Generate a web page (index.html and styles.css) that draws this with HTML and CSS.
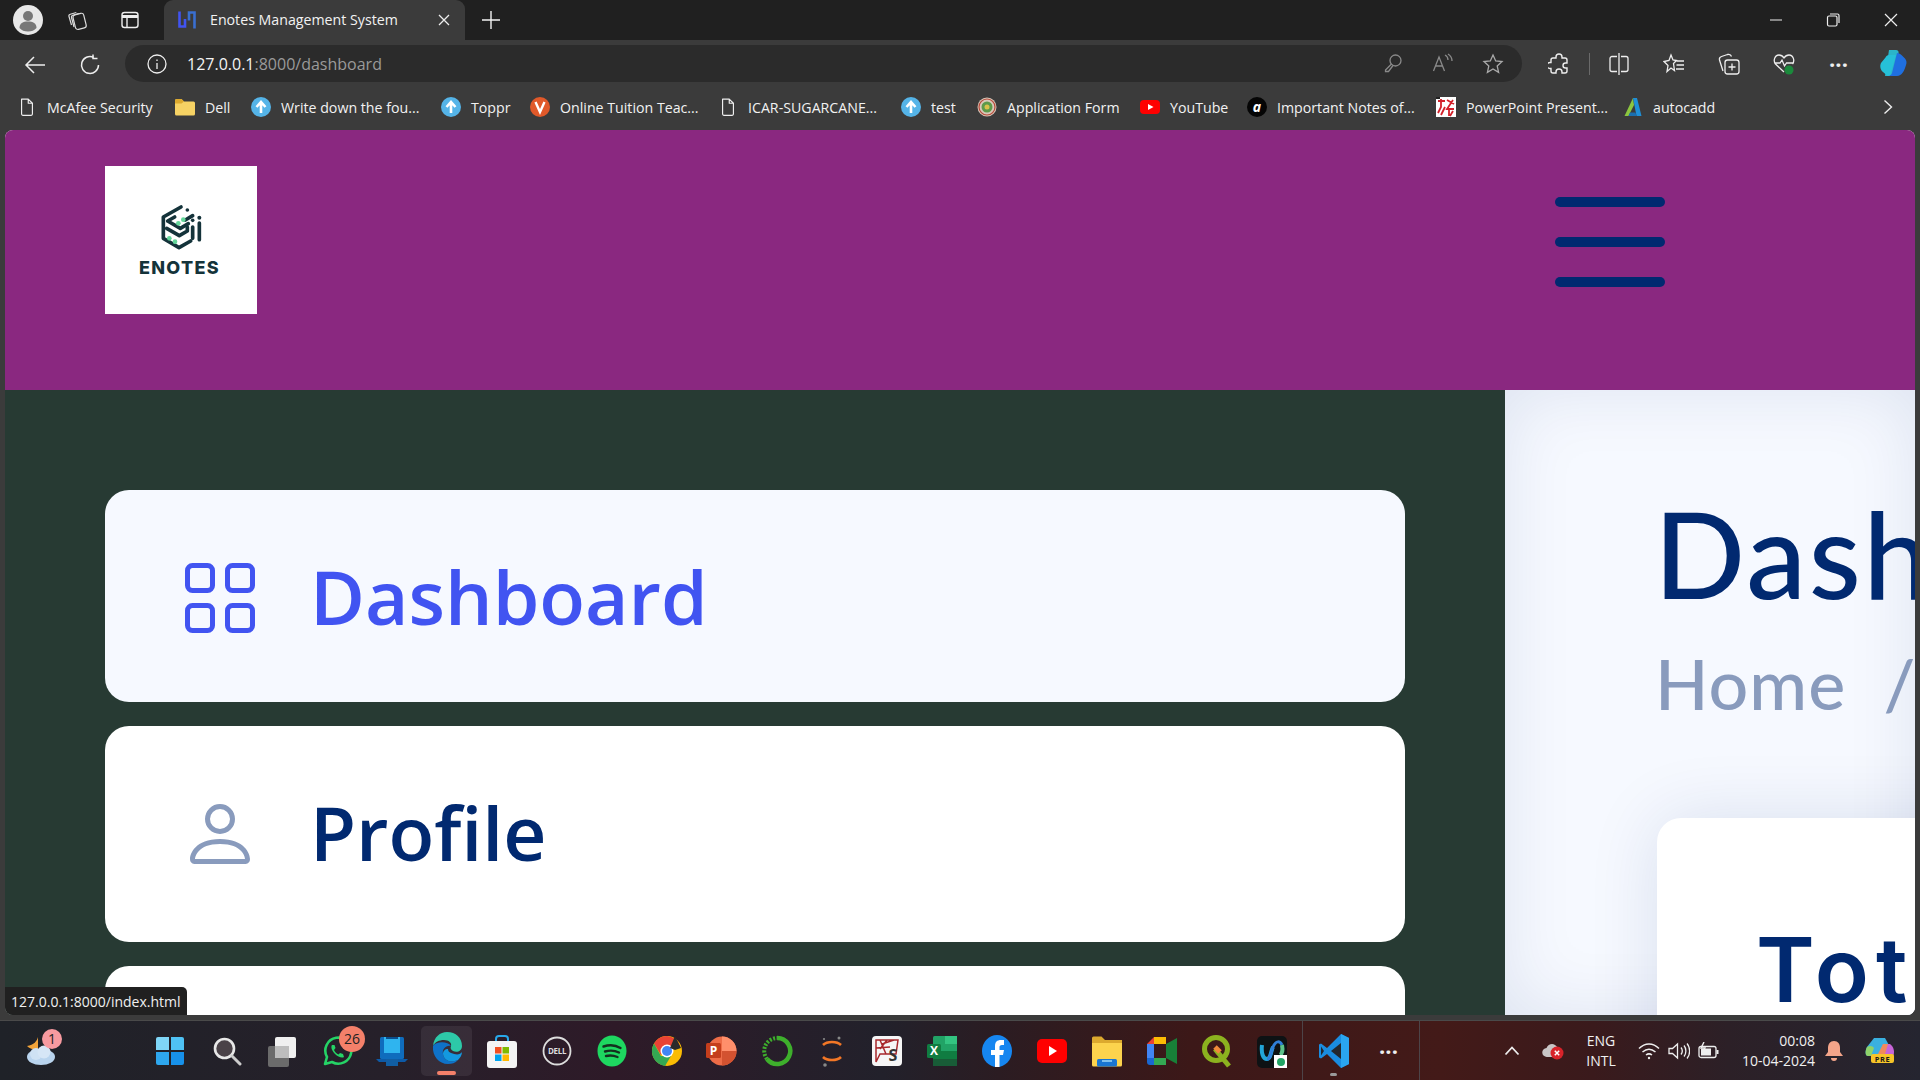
FILE: index.html
```html
<!DOCTYPE html>
<html lang="en">
<head>
<meta charset="utf-8">
<title>Enotes Management System</title>
<link rel="stylesheet" href="styles.css">
</head>
<body>
<svg class="defs" width="0" height="0">
  <symbol id="doc" viewBox="0 0 20 24"><path d="M3.5 2.5h8l5 5v13a1.5 1.5 0 0 1-1.500 1.500H5a1.500 1.500 0 0 1-1.500-1.500zM11.500 2.500v5h5" fill="none" stroke="#eee" stroke-width="1.400" stroke-linejoin="round"/></symbol>
  <symbol id="up" viewBox="0 0 20 20"><circle cx="10" cy="10" r="10" fill="#55b4e8"/><path d="M10 16V6M5.500 10 10 5l4.500 5" fill="none" stroke="#fff" stroke-width="2.600"/></symbol>
</svg>

<div class="tabstrip">
  <span class="avatar"><svg width="30" height="30" viewBox="0 0 30 30"><circle cx="15" cy="15" r="15" fill="#e8e8e8"/><circle cx="15" cy="11" r="5" fill="#777"/><path d="M6.500 23c0-5 3.500-6.500 8.500-6.500s8.500 1.500 8.500 6.500c-2 2.500-5 3.500-8.500 3.500s-6.500-1-8.500-3.500z" fill="#777"/></svg></span>
  <span class="strip-btn strip-btn-first"><svg width="22" height="22" viewBox="0 0 22 22" fill="none" stroke="#ddd" stroke-width="1.200"><rect x="8" y="5" width="11" height="15" rx="2.500" transform="rotate(-14 13 12)"/><path d="M5.500 16 3 7.500c-.3-1 .3-2 1.300-2.300l6-1.700M8 18 5.500 8.500c-.3-1 .3-2 1.300-2.300l6-1.700"/></svg></span>
  <span class="strip-btn"><svg width="20" height="20" viewBox="0 0 20 20" fill="none" stroke="#eee" stroke-width="1.400"><rect x="2" y="2.500" width="16" height="15" rx="2.500"/><path d="M2 6.500h16" stroke-width="3"/><path d="M7 6.500v11"/></svg></span>
  <div class="tab">
    <svg width="20" height="20" viewBox="0 0 20 20" fill="none" stroke="#4154f1" stroke-width="2.600"><path d="M2.500 1.500v15h5.500V9"/><path d="M17.500 18.500v-16H12v8" stroke="#3a6fd0"/></svg>
    <span class="tab-title">Enotes Management System</span>
    <svg class="tab-x" width="12" height="12" viewBox="0 0 12 12" stroke="#eee" stroke-width="1.300"><path d="M1 1l10 10M11 1 1 11"/></svg>
  </div>
  <svg class="tab-new" width="18" height="18" viewBox="0 0 18 18" stroke="#f2f2f2" stroke-width="1.400"><path d="M9 0v18M0 9h18"/></svg>
  <div class="winctl">
    <svg width="12" height="12" viewBox="0 0 12 12" stroke="#eee"><path d="M0 6h12"/></svg>
    <svg width="14" height="14" viewBox="0 0 14 14" fill="none" stroke="#eee" stroke-width="1.200"><rect x="1.500" y="3" width="9.500" height="10" rx="1.500"/><path d="M4 1h7.500A1.500 1.500 0 0 1 13 2.500V10"/></svg>
    <svg width="14" height="14" viewBox="0 0 14 14" stroke="#eee" stroke-width="1.200"><path d="M1 1l12 12M13 1 1 13"/></svg>
  </div>
</div>

<div class="toolbar">
  <span class="nav-btn"><svg width="22" height="20" viewBox="0 0 22 20" fill="none" stroke="#eee" stroke-width="1.500"><path d="M21 10H2M10 2l-8 8 8 8"/></svg></span>
  <span class="nav-btn nav-reload"><svg width="22" height="22" viewBox="0 0 22 22" fill="none" stroke="#eee" stroke-width="1.500"><path d="M14.500 3.200A8.500 8.500 0 1 0 19.500 11"/><path d="M14 .5v4h4.500"/></svg></span>
  <div class="address">
    <svg class="addr-info" width="20" height="20" viewBox="0 0 20 20" fill="none" stroke="#eee" stroke-width="1.300"><circle cx="10" cy="10" r="9"/><path d="M10 9v6M10 5.500v1.500"/></svg>
    <span class="url"><span class="url-host">127.0.0.1</span>:8000/dashboard</span>
    <span class="addr-end">
      <span class="addr-cell"><svg width="20" height="20" viewBox="0 0 20 20" fill="none" stroke="#8a8a8a" stroke-width="1.300"><circle cx="12.500" cy="7.500" r="5.500"/><path d="M8.500 11 2.500 17v1.500h3l4.500-6"/></svg></span>
      <span class="addr-cell"><svg width="22" height="20" viewBox="0 0 22 20" fill="none" stroke="#8a8a8a" stroke-width="1.300"><path d="M1.500 18 7 4l5.500 14M3.500 13h7"/><path d="M13 2c2 1 3 3 3 5M16 1c2.500 1.500 4 4 4 7"/></svg></span>
      <span class="addr-cell"><svg width="22" height="22" viewBox="0 0 22 22" fill="none" stroke="#aaa" stroke-width="1.300"><path d="m11 2 2.700 6 6.300.600-4.800 4.300 1.400 6.500L11 16l-5.600 3.400 1.400-6.500L2 8.600 8.300 8z"/></svg></span>
    </span>
  </div>
  <div class="tools">
    <span class="tool"><svg width="22" height="22" viewBox="0 0 22 22" fill="none" stroke="#eee" stroke-width="1.400"><path d="M8 5V4a3 3 0 0 1 6 0v1h3a2 2 0 0 1 2 2v3h-1.500a2.500 2.500 0 0 0 0 5H19v3a2 2 0 0 1-2 2h-3v-1a3 3 0 0 0-6 0v1H5a2 2 0 0 1-2-2v-2.500H2a3 3 0 0 1 0-6h1V7a2 2 0 0 1 2-2z"/></svg></span>
    <span class="tool-sep"></span>
    <span class="tool"><svg width="20" height="22" viewBox="0 0 20 22" fill="none" stroke="#eee" stroke-width="1.300"><path d="M10 0v22M8 3.500H3A2 2 0 0 0 1 5.500v11a2 2 0 0 0 2 2h5M12 3.500h5a2 2 0 0 1 2 2v11a2 2 0 0 1-2 2h-5"/></svg></span>
    <span class="tool"><svg width="22" height="22" viewBox="0 0 22 22" fill="none" stroke="#eee" stroke-width="1.300"><path d="m8 2 2 5 3.500.5-3 3 1 7L8 15l-4 3.500 1-6-4-4 5-1z"/><path d="M13.500 8H21M13.500 12H21M13 16h8" stroke-width="1.600"/></svg></span>
    <span class="tool"><svg width="22" height="24" viewBox="0 0 22 24" fill="none" stroke="#eee" stroke-width="1.300"><path d="M5 19 1.500 8a3 3 0 0 1 2-3.500l6-2c2-.5 3.500.5 4 2"/><rect x="7" y="8" width="14" height="14" rx="2.500"/><path d="M14 11.500v7M10.500 15h7"/></svg></span>
    <span class="tool"><svg width="22" height="24" viewBox="0 0 22 24"><path d="M11 20 2.500 12C0 9 1.500 3 6 3c2.500 0 4 1.500 5 3 1-1.500 2.500-3 5-3 4.500 0 6 6 3.500 9M2 11h5l2-3 2.500 6 2-3H20" fill="none" stroke="#eee" stroke-width="1.300"/><circle cx="16" cy="18" r="4.500" fill="#1b8a3c"/></svg></span>
    <span class="tool tool-dots">···</span>
    <span class="tool tool-last"><svg width="30" height="30" viewBox="0 0 30 30"><path d="M11 1h7c2 0 3 1.500 2.500 3.500L15 24c-.5 2-2 3-4 3H7z" fill="#2bb5c9"/><path d="M3 14c-1.500 3-.5 7 2 9l4 3.500c1 .5 2 .5 3 .5l6-21H11c-1.500 0-3 1-3.500 2.500z" fill="#26c0d8"/><path d="M19 4c2 0 3.500 1 5 2.500l3 3c1.500 2 2 4 1 6.500-1.500 5.500-4 11-9 11h-9c2 0 3.500-1 4-3z" fill="#1f6fe0"/></svg></span>
  </div>
</div>

<div class="bookmarks">
  <div class="bm-grid">
    <span class="bm"><svg class="bm-ico" viewBox="0 0 20 24"><use href="#doc"/></svg>McAfee Security</span>
    <span class="bm"><svg class="bm-ico" viewBox="0 0 20 20"><path d="M0 3.500A1.500 1.500 0 0 1 1.500 2h5l2.500 2.500h9.500A1.500 1.500 0 0 1 20 6v11a1.500 1.500 0 0 1-1.500 1.500h-17A1.500 1.500 0 0 1 0 17z" fill="#f6d264"/><path d="M0 3.500A1.500 1.500 0 0 1 1.500 2h5L9 4.500 6.500 6.500H0z" fill="#dca92e"/></svg>Dell</span>
    <span class="bm"><svg class="bm-ico" viewBox="0 0 20 20"><use href="#up"/></svg>Write down the fou...</span>
    <span class="bm"><svg class="bm-ico" viewBox="0 0 20 20"><use href="#up"/></svg>Toppr</span>
    <span class="bm"><svg class="bm-ico" viewBox="0 0 20 20"><circle cx="10" cy="10" r="10" fill="#e0592a"/><path d="M5.500 5 10 15l4.500-10" fill="none" stroke="#fff" stroke-width="2.400"/></svg>Online Tuition Teac...</span>
    <span class="bm"><svg class="bm-ico" viewBox="0 0 20 24"><use href="#doc"/></svg>ICAR-SUGARCANE...</span>
    <span class="bm"><svg class="bm-ico" viewBox="0 0 20 20"><use href="#up"/></svg>test</span>
    <span class="bm"><svg class="bm-ico" viewBox="0 0 20 20"><circle cx="10" cy="10" r="9.500" fill="#d8c8b8"/><circle cx="10" cy="10" r="8" fill="none" stroke="#b8483a" stroke-width="1.200"/><circle cx="10" cy="10" r="5.500" fill="#5d9a4a"/><circle cx="10" cy="10" r="2.500" fill="#d9c24a"/></svg>Application Form</span>
    <span class="bm"><svg class="bm-ico" viewBox="0 0 20 20"><rect y="3" width="20" height="14" rx="4" fill="#f00"/><path d="m8 7 5.500 3L8 13z" fill="#fff"/></svg>YouTube</span>
    <span class="bm"><span class="bm-a">a</span>Important Notes of...</span>
    <span class="bm"><svg class="bm-ico" viewBox="0 0 20 20"><rect width="20" height="20" fill="#fff"/><path d="M2 4h7M5 2v8l-3 6M9 10l-4 8M11 3l7 4M17 3l-6 9h7M13 12v7M17 14l-3 5" stroke="#d4202a" stroke-width="1.800" fill="none"/><path d="M0 0h4v2H0z" fill="#222"/></svg>PowerPoint Present...</span>
    <span class="bm"><svg class="bm-ico" viewBox="0 0 20 20"><path d="M10 1 1.500 19h4L11 8z" fill="#8cc63f"/><path d="M10 1h4l4.500 18h-5z" fill="#1f8fd6"/><path d="M5.500 19h8l-1-3.500H7z" fill="#1a6fb0"/></svg>autocadd</span>
  </div>
  <svg class="bm-more" width="10" height="16" viewBox="0 0 10 16" fill="none" stroke="#eee" stroke-width="1.400"><path d="m1.500 1.500 7 6.500-7 6.500"/></svg>
</div>

<div class="viewport">
  <header class="site-header">
    <div class="logo">
      <svg class="logo-mark" viewBox="0 0 210 192" fill="none" stroke="#14333a" stroke-width="11" stroke-linecap="round" stroke-linejoin="round">
        <path d="M93 36 40 66v64l47 28 35-20"/>
        <path d="M74 66 53 78l38 22 24-14"/>
        <path d="M128 62l-22 13"/>
        <path d="M50 100l38 22 24-14v-12"/>
        <path d="M148 84v50M128 96v34"/>
        <g fill="#14333a" stroke="none"><circle cx="112" cy="45" r="5.500"/><circle cx="128" cy="76" r="5.500"/><circle cx="148" cy="68" r="6"/></g>
        <g fill="#63d69a" stroke="none"><circle cx="100" cy="74" r="7"/><circle cx="85" cy="85" r="7"/><circle cx="58" cy="130" r="7"/><circle cx="75" cy="140" r="7"/></g>
      </svg>
      <span class="logo-text">ENOTES</span>
    </div>
    <div class="burger"><span></span><span></span><span></span></div>
  </header>
  <div class="content">
    <aside class="sidebar">
      <a class="nav-card nav-card-active">
        <svg class="nav-ico nav-ico-grid" viewBox="1 1 14 14" fill="none" stroke="#4154f1" stroke-width="1"><rect x="1.500" y="1.500" width="5" height="5" rx="1"/><rect x="9.500" y="1.500" width="5" height="5" rx="1"/><rect x="1.500" y="9.500" width="5" height="5" rx="1"/><rect x="9.500" y="9.500" width="5" height="5" rx="1"/></svg>
        <span>Dashboard</span>
      </a>
      <a class="nav-card nav-card-tall">
        <svg class="nav-ico nav-ico-person" viewBox="2 2 12 12" fill="#899bbd"><path d="M8 8a3 3 0 1 0 0-6 3 3 0 0 0 0 6zm2-3a2 2 0 1 1-4 0 2 2 0 0 1 4 0zm4 8c0 1-1 1-1 1H3s-1 0-1-1 1-4 6-4 6 3 6 4zm-1-.004c-.001-.246-.154-.986-.832-1.664C11.516 10.680 10.289 10 8 10c-2.290 0-3.516.680-4.168 1.332-.678.678-.830 1.418-.832 1.664h10z"/></svg>
        <span class="nav-label-up">Profile</span>
      </a>
      <a class="nav-card nav-card-tall"></a>
    </aside>
    <main class="main">
      <h1 class="page-title">Dashboard</h1>
      <div class="crumbs">Home&nbsp; /&nbsp; Dashboard</div>
      <section class="stat-card"><h2 class="stat-title">Total</h2></section>
    </main>
  </div>
  <div class="status-tip">127.0.0.1:8000/index.html</div>
</div>

<footer class="taskbar">
  <span class="tb-cell tb-weather">
    <svg width="32" height="34" viewBox="0 0 32 34"><path d="M14 3c-1 4-4 8-11 9 3 3 7 4 11 3z" fill="#f2a43a"/><ellipse cx="17" cy="23" rx="14" ry="8" fill="#b9d4ee"/><circle cx="12" cy="20" r="6" fill="#cfe2f4"/><circle cx="20" cy="18" r="6.500" fill="#d6e6f6"/></svg>
    <span class="badge badge-one">1</span>
  </span>
  <div class="tb-apps">
    <span class="tb-cell"><svg width="30" height="30" viewBox="0 0 30 30"><path d="M1 3a2 2 0 0 1 2-2h11v13H1z" fill="#7fd6f7"/><path d="M16 1h11a2 2 0 0 1 2 2v11H16z" fill="#4fc2f4"/><path d="M1 16h13v13H3a2 2 0 0 1-2-2z" fill="#2ea7ee"/><path d="M16 16h13v11a2 2 0 0 1-2 2H16z" fill="#1791ea"/></svg></span>
    <span class="tb-cell"><svg width="30" height="30" viewBox="0 0 30 30" fill="none"><circle cx="12.500" cy="12.500" r="9.500" fill="#4a4248" stroke="#e8e8e8" stroke-width="2.600"/><path d="m20 20 8 8" stroke="#ccc" stroke-width="3" stroke-linecap="round"/></svg></span>
    <span class="tb-cell"><svg width="32" height="32" viewBox="0 0 32 32"><rect x="9" y="2" width="21" height="21" rx="2" fill="#f0f0f0"/><rect x="2" y="11" width="21" height="21" rx="2" fill="#6b6b6b"/><rect x="9" y="11" width="14" height="12" fill="#bdbdbd"/></svg></span>
    <span class="tb-cell"><svg width="32" height="32" viewBox="0 0 32 32" fill="none"><path d="M4 29l2-7A13 13 0 1 1 11 27z" stroke="#25d366" stroke-width="2.600" stroke-linejoin="round"/><path d="M11 10c-1.500 2 0 6 3 9s7 4.500 9 3l-1-3-3-1-1.500 1.500c-2-1-3.500-2.500-4.500-4.500L14.500 13l-1-3z" fill="#25d366"/></svg><span class="badge badge-wa">26</span></span>
    <span class="tb-cell"><svg width="32" height="32" viewBox="0 0 32 32"><rect x="4" y="2" width="24" height="22" rx="1.500" fill="#0f6cbd"/><rect x="8" y="2" width="16" height="16" fill="#2fb4ef"/><rect x="10" y="2" width="12" height="2" fill="#0a4f8e"/><path d="M0 24h32l-3 3H3z" fill="#0d5aa7"/><rect x="10" y="24" width="12" height="7" fill="#115ea3"/></svg></span>
    <span class="tb-cell tb-active"><svg width="32" height="34" viewBox="0 0 32 34"><path d="M2 15C3 6 9 1 16 1c9 0 15 6 15 14 0 5-5 7-9 5-2-1-3-3-2-5 1-3-2-6-7-6-5 0-9 2-11 6z" fill="#2dc9a8"/><path d="M2 15c-1 10 6 18 15 18 4 0 7-1 10-4-7 3-14 1-15-6-1-5 3-9 8-8-3-5-15-5-18 0z" fill="#0f72c8"/><path d="M12 23c1 7 8 9 15 6 2-2 4-5 4-8-2 3-6 3-11 1-2-1-3-2-3-4-3 0-5 2-5 5z" fill="#1399e0"/></svg><span class="tb-bar"></span></span>
    <span class="tb-cell"><svg width="30" height="34" viewBox="0 0 30 34"><path d="M9 9V5a3 3 0 0 1 3-3h6a3 3 0 0 1 3 3v4" fill="none" stroke="#28a8ea" stroke-width="2"/><rect y="7" width="30" height="27" rx="3" fill="#f4f4f4"/><rect x="8" y="13" width="6.500" height="6.500" fill="#f25022"/><rect x="15.500" y="13" width="6.500" height="6.500" fill="#7fba00"/><rect x="8" y="20.500" width="6.500" height="6.500" fill="#00a4ef"/><rect x="15.500" y="20.500" width="6.500" height="6.500" fill="#ffb900"/></svg></span>
    <span class="tb-cell"><svg width="30" height="30" viewBox="0 0 30 30" fill="none"><circle cx="15" cy="15" r="13.500" stroke="#ddd" stroke-width="1.800"/><text class="tb-dell" x="15" y="18">DELL</text></svg></span>
    <span class="tb-cell"><svg width="30" height="32" viewBox="0 0 30 32" fill="none"><ellipse cx="15" cy="16" rx="14.500" ry="15.500" fill="#1ed760"/><path d="M6.500 11.500c6-2 12-1.500 17 1.500M8 16.500c5-1.500 10-1 14 1M9 21c4-1 8-.5 11.500 1" stroke="#14301f" stroke-width="2.400" stroke-linecap="round"/></svg></span>
    <span class="tb-cell"><svg width="32" height="32" viewBox="0 0 32 32"><circle cx="16" cy="16" r="15" fill="#fbbc04"/><path d="M16 1a15 15 0 0 0-13 7.500L10 20l6-9h13A15 15 0 0 0 16 1z" fill="#ea4335"/><path d="M3 8.500A15 15 0 0 0 14 31l6-10H10z" fill="#34a853"/><circle cx="16" cy="16" r="6.500" fill="#fff"/><circle cx="16" cy="16" r="5" fill="#4285f4"/><path d="M24 1l6 12-6 2-5-2z" fill="#2a2a2a"/></svg></span>
    <span class="tb-cell"><svg width="32" height="34" viewBox="0 0 32 34"><circle cx="16" cy="17" r="14.500" fill="#ed6c47"/><path d="M16 2.500a14.500 14.500 0 0 1 14.500 14.500H16z" fill="#ff8f6b"/><path d="M16 17h14.500A14.500 14.500 0 0 1 16 31.500z" fill="#d35230"/><rect x="0" y="9" width="15" height="15" rx="1.500" fill="#c43e1c"/><text class="tb-letter" x="7.500" y="20.500">P</text></svg></span>
    <span class="tb-cell"><svg width="32" height="32" viewBox="0 0 32 32" fill="none"><path d="M16 3a13 13 0 1 1-10 21" stroke="#3eaf2c" stroke-width="4.500"/><path d="M6 24A13 13 0 0 1 16 3" stroke="#3eaf2c" stroke-width="4" stroke-dasharray="2 1.500"/></svg></span>
    <span class="tb-cell"><svg width="24" height="34" viewBox="0 0 24 34" fill="none"><path d="M3 11c4-4 14-4 18 0M3 23c4 4 14 4 18 0" stroke="#f37726" stroke-width="2.600"/><circle cx="19" cy="4" r="1.500" fill="#888"/><circle cx="5" cy="31" r="1.800" fill="#888"/><circle cx="4" cy="5" r="1.100" fill="#888"/></svg></span>
    <span class="tb-cell"><svg width="30" height="34" viewBox="0 0 30 34"><rect y="2" width="30" height="30" rx="4" fill="#f6f6f6"/><path d="M4 6h22l-2 14H8l-4 8zM8 6l6 14M15 6l-7 9M22 6l-12 4M4 14l14-1" fill="none" stroke="#a8282c" stroke-width="1.500"/><text class="tb-letter tb-letter-dark" x="21" y="27">S</text></svg></span>
    <span class="tb-cell"><svg width="30" height="34" viewBox="0 0 30 34"><rect x="6" y="2" width="24" height="30" rx="1.500" fill="#21a366"/><rect x="18" y="2" width="12" height="8" fill="#33c481"/><rect x="6" y="17" width="24" height="8" fill="#107c41"/><rect x="6" y="25" width="24" height="7" fill="#185c37"/><rect x="0" y="10" width="14" height="14" rx="1.500" fill="#107c41"/><text class="tb-letter" x="7" y="21">X</text></svg></span>
    <span class="tb-cell"><svg width="30" height="34" viewBox="0 0 30 34"><ellipse cx="15" cy="17" rx="15" ry="16" fill="#1686f0"/><path d="M13 33V21H9v-5h4v-4c0-4 2-6 6-6h3v5h-2c-2 0-2.500 1-2.500 2v3H22l-1 5h-3.500v12z" fill="#fff"/></svg></span>
    <span class="tb-cell"><svg width="30" height="30" viewBox="0 0 30 30"><rect y="3" width="30" height="24" rx="5" fill="#f00"/><path d="m12 10 8 5-8 5z" fill="#fff"/></svg></span>
    <span class="tb-cell"><svg width="30" height="32" viewBox="0 0 30 32"><path d="M0 3a1.500 1.500 0 0 1 1.500-1.500h8L13 5h17v6H0z" fill="#dca92e"/><path d="M0 8h30v22a1.500 1.500 0 0 1-1.500 1.500h-27A1.500 1.500 0 0 1 0 30z" fill="#fcd34d"/><rect x="5" y="24" width="20" height="7.500" rx="1.500" fill="#1976d2"/><rect x="10" y="25" width="10" height="2" fill="#7ec1ee"/></svg></span>
    <span class="tb-cell"><svg width="30" height="28" viewBox="0 0 30 28"><path d="M7 0h12v7H7v0z" fill="#fbbc04"/><path d="M7 0 0 7h7z" fill="#ea4335"/><path d="M0 7h7v14H0z" fill="#4285f4"/><path d="M0 21h7v7H3a3 3 0 0 1-3-3z" fill="#1967d2"/><path d="M7 21h12v7H7z" fill="#34a853"/><path d="M19 7v14l11 6V1z" fill="#188038"/></svg></span>
    <span class="tb-cell"><svg width="30" height="34" viewBox="0 0 30 34" fill="none"><circle cx="14" cy="15" r="11.500" stroke="#8cb21f" stroke-width="5"/><path d="M13 15l14 17" stroke="#8cb21f" stroke-width="5"/><path d="M13 13l5 5" stroke="#f0893a" stroke-width="5"/></svg></span>
    <span class="tb-cell"><svg width="30" height="34" viewBox="0 0 30 34" fill="none"><rect y="2" width="30" height="32" rx="5" fill="#0e1214"/><path d="M5 11c-1 8 1 14 5 14 4 0 4-9 6-12" stroke="#22a5d8" stroke-width="4"/><path d="M25 11c-2-4-6-5-9 2-2 4-2 12-6 12" stroke="#2f7fd8" stroke-width="3"/><path d="M25 11c1 5 0 9-2 10" stroke="#5cc28a" stroke-width="4"/><path d="M17 21h13v13H17z" fill="#fff"/><circle cx="24" cy="28" r="4" fill="#22a565"/></svg></span>
    <span class="tb-divider"></span>
    <span class="tb-cell"><svg width="30" height="34" viewBox="0 0 30 34"><path d="M30 4 22 0 8 14 2 9.500 0 10.500v13l2 1 6-4.500 14 14 8-4z" fill="#1a8ce0"/><path d="M22 0v34l8-4V4z" fill="#2aa5ef"/><path d="M22 9 12 17l10 8z" fill="#23272e"/><path d="m2 12.500 3 4.500-3 4.500z" fill="#23272e"/></svg><span class="tb-pip"></span></span>
    <span class="tb-cell tb-more">···</span>
    <span class="tb-divider"></span>
  </div>
  <div class="tray">
    <span class="tray-chev"><svg width="16" height="10" viewBox="0 0 16 10" fill="none" stroke="#eee" stroke-width="1.800"><path d="m1.500 8.500 6.500-7 6.500 7"/></svg></span>
    <span class="tray-cloud"><svg width="22" height="18" viewBox="0 0 22 18"><path d="M5 15a4.500 4.500 0 0 1-.5-9C6 2.500 10 1 13 3c2 1 3 3 3 5v7z" fill="#c9c6c6"/><circle cx="15" cy="11" r="6.500" fill="#d8232a"/><path d="m12.800 8.800 4.400 4.400m0-4.400-4.400 4.400" stroke="#fff" stroke-width="1.500"/></svg></span>
    <span class="tray-lang"><span>ENG</span><span>INTL</span></span>
    <span class="tray-ico tray-ico-first"><svg width="22" height="18" viewBox="0 0 22 18" fill="none" stroke="#eee" stroke-width="1.500"><path d="M1 6.500c6-6 14-6 20 0M4.500 10c4-3.500 9-3.500 13 0M8 13c2-1.500 4-1.500 6 0"/><circle cx="11" cy="16" r="1.200" fill="#eee" stroke="none"/></svg></span>
    <span class="tray-ico"><svg width="22" height="18" viewBox="0 0 22 18" fill="none" stroke="#eee" stroke-width="1.300"><path d="M1 6.500h3.500L9.500 2v14l-5-4.500H1z"/><path d="M13 5.500c1.500 2 1.500 5 0 7M16 3.500c2.500 3 2.500 8 0 11M19 1.500c3.500 4 3.500 11 0 15"/></svg></span>
    <span class="tray-ico"><svg width="22" height="18" viewBox="0 0 22 18" fill="none" stroke="#eee" stroke-width="1.300"><rect x="1" y="4.500" width="17" height="11" rx="2"/><path d="M19.500 8v4" stroke-width="2"/><rect x="3" y="6.500" width="10" height="7" fill="#eee" stroke="none"/><path d="M6 0 3 6h4L5 11" stroke-width="1.400"/></svg></span>
    <span class="tray-clock"><span>00:08</span><span>10-04-2024</span></span>
    <span class="tray-bell"><svg width="18" height="22" viewBox="0 0 18 22"><path d="M9 1c4 0 6 3 6 7v4l3 4H0l3-4V8c0-4 2-7 6-7z" fill="#f4a58a"/><path d="M6 18h6a3 3 0 0 1-6 0z" fill="#f4a58a"/></svg></span>
    <span class="tray-copilot"><svg width="30" height="26" viewBox="0 0 30 26"><path d="M9 0h11l5 9-10 9H3C0 18 0 13 2 9z" fill="#3ab0e0"/><path d="M2 9c3-2 6-1 7 1l-3 8H3C0 18 0 13 2 9z" fill="#8ed36a"/><path d="M18 6h7c4 3 5 8 3 13H15z" fill="#c765d8"/><path d="M18 6h5l-3 10h-7z" fill="#f08a5b"/><rect x="6" y="16" width="23" height="9" rx="2" fill="#f6c428"/><text class="tb-pre" x="17.500" y="23.500">PRE</text></svg></span>
  </div>
</footer>
</body>
</html>
```

FILE: styles.css
```css
* { box-sizing: border-box; }
html, body { margin: 0; height: 100%; }
body {
  width: 1920px;
  height: 1080px;
  overflow: hidden;
  display: flex;
  flex-direction: column;
  background: #3b3b3b;
  color: #f2f2f2;
  font-family: "Open Sans", "Liberation Sans", sans-serif;
}
.defs { position: absolute; }
svg { display: block; flex-shrink: 0; }

/* tab strip */
.tabstrip { height: 40px; flex-shrink: 0; display: flex; align-items: center; background: #202020; padding-left: 13px; }
.avatar { width: 30px; }
.strip-btn { width: 53px; display: flex; justify-content: center; }
.strip-btn-first { margin-left: 7px; }
.tab {
  width: 301px; height: 40px; margin-left: 8px;
  display: flex; align-items: center; padding-left: 13px;
  background: #3b3b3b; border-radius: 9px 9px 0 0;
  font-size: 14.200px;
}
.tab-title { margin: 0 0 1px 13px; width: 228px; white-space: nowrap; }
.tab-x { flex-shrink: 0; }
.tab-new { margin-left: 17px; }
.winctl { margin-left: auto; display: flex; align-items: center; gap: 44px; padding-right: 22px; }

/* toolbar */
.toolbar { height: 50px; flex-shrink: 0; display: flex; align-items: center; padding-left: 15px; }
.nav-btn { width: 40px; display: flex; justify-content: center; }
.nav-reload { margin-left: 15px; }
.address {
  width: 1397px; height: 37px; flex-shrink: 0; margin-left: 15px; margin-top: -3px;
  display: flex; align-items: center; padding: 0 4px 0 22px;
  background: #2b2b2b; border-radius: 19px;
}
.url { margin-left: 20px; font-size: 16px; color: #9a9a9a; white-space: nowrap; }
.url-host { color: #f4f4f4; }
.addr-end { margin-left: auto; display: flex; }
.addr-cell { width: 50px; display: flex; justify-content: center; }
.tools { display: flex; align-items: center; margin-left: 9px; margin-top: -3px; }
.tool { width: 55px; flex-shrink: 0; display: flex; justify-content: center; align-items: center; height: 30px; }
.tool-last { width: 54px; }
.tool-sep { width: 1px; height: 22px; background: #6a6a6a; margin: 0 1px 0 3px; }
.tool-dots { font-size: 22px; font-weight: 700; line-height: 30px; color: #eee; }

/* bookmarks */
.bookmarks { height: 40px; flex-shrink: 0; display: flex; align-items: center; padding: 0 27px 6px 17px; }
.bm-grid {
  display: grid;
  grid-template-columns: 158px 76px 190px 89px 188px 183px 76px 163px 107px 189px 187px 100px;
  align-items: center;
}
.bm { display: flex; align-items: center; gap: 10px; font-size: 14.200px; white-space: nowrap; color: #f2f2f2; }
.bm-ico { width: 20px; height: 20px; }
.bm-a {
  width: 20px; height: 20px; border-radius: 50%; background: #050505; color: #fff;
  font: italic 700 14px/19px "Open Sans", sans-serif; text-align: center; flex-shrink: 0;
}
.bm-more { margin-left: auto; }

/* page viewport */
.viewport {
  position: relative;
  height: 885px; flex-shrink: 0;
  margin: 0 5px;
  overflow: hidden;
  border-radius: 8px;
  display: flex; flex-direction: column;
  background: #fff;
}
.site-header {
  height: 260px; flex-shrink: 0;
  display: flex; align-items: flex-start; justify-content: space-between;
  padding: 36px 250px 0 100px;
  background: #8a2880;
}
.logo { width: 152px; height: 148px; background: #fff; padding: 29px 0 0 34px; }
.logo-mark { width: 70px; height: 64px; margin-left: 11px; }
.logo-text { display: block; margin-top: -1px; font: 800 18px/19px Inter, "Open Sans", sans-serif; letter-spacing: 1.300px; color: #14333a; }
.burger { display: flex; flex-direction: column; gap: 30px; margin-top: 31px; }
.burger span { display: block; width: 110px; height: 10px; border-radius: 5px; background: #012970; }

.content { flex: 1; min-height: 0; display: flex; }
.sidebar {
  width: 1500px; flex-shrink: 0;
  display: flex; flex-direction: column; gap: 24px;
  padding: 100px 100px 0;
  background: #273a33;
  overflow: hidden;
}
.nav-card {
  height: 212px; flex-shrink: 0;
  display: flex; align-items: center; gap: 55px;
  padding-left: 80px;
  background: #fff; border-radius: 24px;
  font-size: 75px; font-weight: 600; color: #012970;
}
.nav-card-tall { height: 216px; }
.nav-card-active { background: #f6f9ff; color: #4154f1; }
.nav-ico { width: 70px; height: 70px; }
.nav-ico-grid { margin-top: 4px; }
.nav-ico-person { width: 60px; height: 60px; margin: 0 5px; }
.nav-label-up { margin-bottom: 5px; }

.main {
  flex: 1; min-width: 0;
  padding: 98px 0 0 152px;
  overflow: hidden;
  background: #f6f9ff;
  box-shadow: inset 0 0 70px rgba(1, 41, 112, .1);
  color: #012970;
  white-space: nowrap;
}
.page-title { margin: 0 0 0 -3px; font: 500 120px/130px Lato, "Open Sans", sans-serif; letter-spacing: 2.500px; }
.crumbs { margin: 20px 0 0 -2px; font: 500 70px/90px Lato, "Open Sans", sans-serif; letter-spacing: 1px; color: #899bbd; }
.stat-card {
  width: 700px; height: 400px;
  margin-top: 90px;
  padding: 102px 0 0 99px;
  background: #fff; border-radius: 24px;
  box-shadow: 0 0 70px rgba(1, 41, 112, .12);
}
.stat-title { margin: 0; font: 600 89px/100px Inter, "Open Sans", sans-serif; letter-spacing: 7px; color: #012970; }

.status-tip {
  position: absolute; left: 0; bottom: 0;
  height: 28px; padding: 0 6px;
  display: flex; align-items: center;
  background: #202020; border-radius: 0 5px 0 0;
  font-size: 14px; color: #f0f0f0;
}

/* taskbar */
.taskbar {
  height: 60px; flex-shrink: 0; margin-top: 5px;
  display: flex; align-items: center;
  padding-left: 14px;
  border-top: 1px solid #4a4a4a;
  background: linear-gradient(90deg, #1f2228 0%, #26202a 20%, #2e1a28 32%, #22212b 46%, #2b1c22 52%, #3c1818 62%, #431a18 75%, #3a1a1c 83%, #2c2027 90%, #252530 100%);
}
.tb-cell { position: relative; width: 55px; height: 50px; flex-shrink: 0; display: flex; align-items: center; justify-content: center; }
.tb-weather svg { margin-right: 4px; }
.tb-apps { display: flex; align-items: center; margin-left: 73px; height: 100%; }
.tb-apps > .tb-cell:first-child { width: 57px; padding-right: 2px; }
.tb-active::before {
  content: ""; position: absolute; left: 2px; right: 2px; top: 0; bottom: 0;
  background: rgba(255, 255, 255, .07); border-radius: 5px;
}
.tb-active svg { position: relative; top: -3px; }
.tb-bar { position: absolute; left: 18px; bottom: 1px; width: 19px; height: 4px; border-radius: 2px; background: #f4806a; }
.tb-pip { position: absolute; left: 24px; bottom: 0; width: 7px; height: 3px; border-radius: 2px; background: #9a9a9a; }
.tb-divider { width: 1px; height: 60px; background: #4d4448; flex-shrink: 0; margin: 0 3px; }
.tb-more { font-size: 22px; font-weight: 700; color: #eee; }
.badge {
  position: absolute; display: flex; align-items: center; justify-content: center;
  border-radius: 50%; color: #222; font-size: 14px; line-height: 1;
}
.badge-one { width: 20px; height: 20px; left: 28px; top: 3px; background: #f79aa0; }
.badge-wa { width: 26px; height: 26px; left: 30px; top: 0; background: #f4806a; }
.tb-letter { font: 700 12px "Open Sans", sans-serif; fill: #fff; text-anchor: middle; }
.tb-letter-dark { font-size: 16px; fill: #333; }
.tb-dell { font: 700 8px "Open Sans", sans-serif; fill: #ddd; text-anchor: middle; letter-spacing: -.3px; }
.tb-pre { font: 700 7.500px "Open Sans", sans-serif; fill: #1a1a1a; text-anchor: middle; letter-spacing: .5px; }

.tray { display: flex; align-items: center; margin-left: auto; height: 100%; padding-right: 25px; }
.tray-chev { width: 24px; display: flex; justify-content: center; }
.tray-cloud { width: 30px; margin-left: 14px; display: flex; justify-content: center; }
.tray-lang { width: 50px; margin-left: 8px; display: flex; flex-direction: column; align-items: center; font-size: 14px; line-height: 20px; color: #f0f0f0; }
.tray-ico { width: 30px; display: flex; justify-content: center; }
.tray-ico-first { margin-left: 8px; }
.tray-clock { width: 85px; margin-left: 6px; display: flex; flex-direction: column; align-items: flex-end; font-size: 14px; line-height: 20px; color: #f0f0f0; }
.tray-bell { margin-left: 10px; }
.tray-copilot { margin-left: 22px; }
```
